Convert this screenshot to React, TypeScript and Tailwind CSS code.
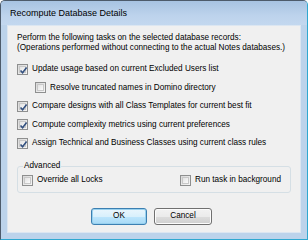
import React from "react";

function Check({ checked }: { checked?: boolean }) {
  return (
    <div className="w-[11px] h-[11px] border border-[#8e8f8f] bg-[linear-gradient(135deg,#d8d8d8,#f6f6f6)] p-[1px] shrink-0">
      <div className="w-full h-full border border-[#c8c8c8] bg-[linear-gradient(135deg,#e2e2e2,#fbfbfb)] relative">
        {checked && (
          <svg viewBox="0 0 9 9" className="absolute left-[-1px] top-[-1px] w-[9px] h-[9px]">
            <path d="M1.5 4.5 L3.6 6.8 L7.6 1.6" fill="none" stroke="#33507f" strokeWidth="1.6" />
          </svg>
        )}
      </div>
    </div>
  );
}

function Row({ checked, label, indent }: { checked?: boolean; label: string; indent?: boolean }) {
  return (
    <div className={`flex items-center gap-[4px] h-[18.5px] ${indent ? "pl-[18px]" : ""}`}>
      <Check checked={checked} />
      <span>{label}</span>
    </div>
  );
}

export default function App() {
  return (
    <div
      className="w-[308px] h-[240px] bg-[#bcd3eb] border border-[#4d5b6b] border-r-[#2fa8d0] border-b-[#2fa8d0] rounded-t-[5px] flex flex-col overflow-hidden text-black whitespace-nowrap"
      style={{ fontFamily: '"Liberation Sans", Arial, sans-serif' }}
    >
      <div className="h-[24px] shrink-0 bg-[linear-gradient(180deg,#a7c3e2_0%,#bdd3ec_60%,#c3d8ef_100%)] flex items-center pl-[9px] text-[9px] pt-[2px]">
        Recompute Database Details
      </div>
      <div className="flex-1 mx-[6px] mb-[6px] bg-[#f0f0f0] border border-[#dce6f1] text-[8.2px] leading-[10px] flex flex-col pl-[9px] pr-[9px] pt-[7px]">
        <div>Perform the following tasks on the selected database records:</div>
        <div>(Operations performed without connecting to the actual Notes databases.)</div>
        <div className="mt-[7px] flex flex-col">
          <Row checked label="Update usage based on current Excluded Users list" />
          <Row indent label="Resolve truncated names in Domino directory" />
          <Row checked label="Compare designs with all Class Templates for current best fit" />
          <Row checked label="Compute complexity metrics using current preferences" />
          <Row checked label="Assign Technical and Business Classes using current class rules" />
        </div>
        <div className="relative mt-[13px] h-[27px] border border-[#d5dfe5] rounded-[3px] flex items-center justify-between pl-[4px] pr-[9px] pt-[2px]">
          <span className="absolute left-[5px] top-[-6px] bg-[#f0f0f0] px-[1px]">Advanced</span>
          <div className="flex items-center gap-[4px]">
            <Check />
            <span>Override all Locks</span>
          </div>
          <div className="flex items-center gap-[4px]">
            <Check />
            <span>Run task in background</span>
          </div>
        </div>
        <div className="flex justify-center gap-[7px] mt-[15px] pr-[5px]">
          <button className="w-[56px] h-[17px] rounded-[3px] border border-[#3c7fb1] bg-[linear-gradient(180deg,#eaf6fd_0%,#d9f0fc_50%,#bee6fd_50%,#a7d9f5_100%)] shadow-[inset_0_0_0_1px_#98d1ef] text-[8.2px]">
            OK
          </button>
          <button className="w-[58px] h-[17px] rounded-[3px] border border-[#707070] bg-[linear-gradient(180deg,#f2f2f2_0%,#ebebeb_50%,#dddddd_50%,#cfcfcf_100%)] shadow-[inset_0_0_0_1px_#fcfcfc] text-[8.2px]">
            Cancel
          </button>
        </div>
      </div>
    </div>
  );
}
